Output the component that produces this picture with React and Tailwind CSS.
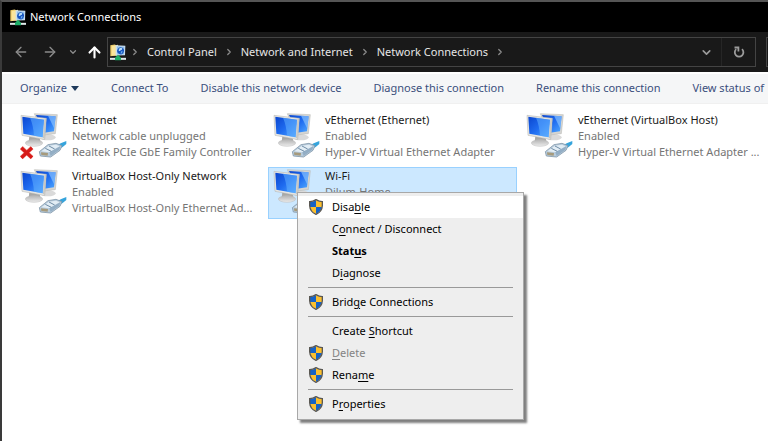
import { ArrowLeft, ArrowRight, ArrowUp, ChevronDown, ChevronRight } from "lucide-react";

// Network folder icon, used in the title bar and the address bar
function NetworkFolderIcon() {
  return (
    <svg viewBox="0 0 48 50" className="h-[17px] w-4 shrink-0" aria-hidden="true">
      <path d="M1 3 L14 1 L20 4 L20 34 L1 36 Z" fill="#f0cf6c" />
      <path d="M5 6 L24 2 L24 34 L5 34 Z" fill="#fae59c" />
      <path d="M17 3 L46 5 L45 33 L17 34 Z" fill="#c9def0" />
      <path d="M21 7 L43 8 L42 30 L21 31 Z" fill="#8fbce6" />
      <path d="M30 9 Q41 9 42 18 Q42 28 33 31 Q22 30 21 20 Q22 12 30 9 Z" fill="#1553c0" />
      <path d="M27 14 q6 -5 10 -2 q0 6 -5 6 q-3 4 -6 2 z" fill="#b5dcf8" />
      <path d="M33 22 l5 -2 l-2 7 l-4 2 z" fill="#6fb0ec" />
      <rect x="0" y="41" width="48" height="6" fill="#dfe9ea" />
      <path d="M24 32 L33 41 L33 48 L15 48 L15 41 Z" fill="#1fae68" />
    </svg>
  );
}

// Pair of monitors with an ethernet plug in front
function ConnectionIcon({ unplugged }) {
  return (
    <svg viewBox="0 0 144 144" className="h-12 w-12 shrink-0" aria-hidden="true">
      <defs>
        <linearGradient id="screen" x1="0" y1="0" x2="1" y2="1">
          <stop offset="0" stopColor="#0a45cf" />
          <stop offset="0.5" stopColor="#1f6cf0" />
          <stop offset="1" stopColor="#4fa8ff" />
        </linearGradient>
        <linearGradient id="stand" x1="0" y1="0" x2="0" y2="1">
          <stop offset="0" stopColor="#b4b4b4" />
          <stop offset="1" stopColor="#ececec" />
        </linearGradient>
      </defs>
      <ellipse cx="84" cy="76" rx="23" ry="9" fill="#dadada" />
      <path d="M43 5 L112 8 L106 65 L70 69 Z" fill="#d5d5d2" stroke="#b4b4b0" strokeWidth="1.5" />
      <path d="M48 9 L107 13 L102 58 L72 62 Z" fill="url(#screen)" />
      <path d="M84 11 L107 13 L103 50 Z" fill="#8fc8ff" opacity="0.65" />
      <path d="M28 72 L58 76 L62 91 L26 90 Z" fill="#a8a8a6" />
      <ellipse cx="42" cy="93" rx="26" ry="10" fill="url(#stand)" stroke="#bdbdbd" strokeWidth="1.5" />
      <path d="M3 10 L79 19 L74 83 L6 70 Z" fill="#e6e6e3" stroke="#b0b0ac" strokeWidth="1.5" />
      <path d="M7 14 L72 23 L68 76 L10 65 Z" fill="url(#screen)" />
      <path d="M30 17 L72 23 L68 76 L42 71 Q40 40 30 17 Z" fill="#62b0ff" opacity="0.55" />
      <path d="M73 22 L79 19 L74 83 L69 76 Z" fill="#c8c8c4" />
      {/* plug */}
      <path d="M104 104 L122 94 L139 87 L139 96 L128 105 L112 114 Z" fill="#35a4dc" />
      <path d="M58 119 L84 98 L108 94 L126 101 L120 115 L92 135 L61 132 Z" fill="#b7cbdc" stroke="#8399ab" strokeWidth="2.5" />
      <path d="M64 118 L87 101 L108 98 L119 103 L88 121 Z" fill="#e2edf5" />
      <path d="M88 121 L121 103 L118 113 L92 132 Z" fill="#93aec5" />
      <path d="M63 121 L84 123 L83 131 L64 129 Z" fill="#a69a7c" />
      <path d="M76 109 L94 118 M87 102 L104 111" stroke="#6f8ca5" strokeWidth="3" fill="none" />
      {unplugged && (
        <>
          <path d="M4 107 L36 137 M36 107 L4 137" stroke="#f4a9a2" strokeWidth="13" />
          <path d="M4 107 L36 137 M36 107 L4 137" stroke="#d61a18" strokeWidth="10" />
        </>
      )}
    </svg>
  );
}

function ShieldIcon() {
  return (
    <svg viewBox="0 0 42 48" className="h-4 w-3.5" aria-hidden="true">
      <path d="M21 3 Q12 9 3 9 L3 24 L21 24 Z" fill="#1763c6" />
      <path d="M21 3 Q30 9 39 9 L39 24 L21 24 Z" fill="#fcc02e" />
      <path d="M3 24 L21 24 L21 45 Q6 38 3 24 Z" fill="#fcc02e" />
      <path d="M39 24 L21 24 L21 45 Q36 38 39 24 Z" fill="#1763c6" />
      <path
        d="M21 2 Q30 8 40 8 L40 20 Q39 38 21 46 Q3 38 2 20 L2 8 Q12 8 21 2 Z"
        fill="none"
        stroke="#5a5853"
        strokeWidth="4"
      />
    </svg>
  );
}

function RefreshIcon() {
  return (
    <svg viewBox="0 0 12 12" className="size-3" fill="none" stroke="currentColor" strokeWidth="1.8" aria-hidden="true">
      <path d="M9 3.2 A4.3 4.3 0 1 1 3.2 3.2" />
      <path d="M1.5 1.5 H5.4 V5.4" />
    </svg>
  );
}

const crumbs = ["Control Panel", "Network and Internet", "Network Connections"];

const commands = [
  "Connect To",
  "Disable this network device",
  "Diagnose this connection",
  "Rename this connection",
  "View status of",
];

const connections = [
  { name: "Ethernet", status: "Network cable unplugged", device: "Realtek PCIe GbE Family Controller", unplugged: true },
  { name: "vEthernet (Ethernet)", status: "Enabled", device: "Hyper-V Virtual Ethernet Adapter" },
  { name: "vEthernet (VirtualBox Host)", status: "Enabled", device: "Hyper-V Virtual Ethernet Adapter ..." },
  { name: "VirtualBox Host-Only Network", status: "Enabled", device: "VirtualBox Host-Only Ethernet Ad..." },
  { name: "Wi-Fi", status: "Dilum-Home", selected: true },
];

// Each label is split around its underlined access key
const menuGroups = [
  [
    { label: ["Disa", "b", "le"], shield: true, active: true },
    { label: ["C", "o", "nnect / Disconnect"] },
    { label: ["Stat", "u", "s"], bold: true },
    { label: ["D", "i", "agnose"] },
  ],
  [{ label: ["Brid", "g", "e Connections"], shield: true }],
  [
    { label: ["Create ", "S", "hortcut"] },
    { label: ["", "D", "elete"], shield: true, disabled: true },
    { label: ["Rena", "m", "e"], shield: true },
  ],
  [{ label: ["P", "r", "operties"], shield: true }],
];

function TitleBar() {
  return (
    <header className="flex h-[30px] items-center gap-1 bg-black pl-2 text-white">
      <NetworkFolderIcon />
      <h1>Network Connections</h1>
    </header>
  );
}

function AddressBar() {
  return (
    <nav className="flex h-10 items-center bg-[#191919] text-[#e6e6e6]">
      <div className="flex w-[105px] shrink-0 items-center pl-[11px] text-[#8b8b8b]">
        <button aria-label="Back" className="mr-[13px]"><ArrowLeft size={16} /></button>
        <button aria-label="Forward" className="mr-2.5"><ArrowRight size={16} /></button>
        <button aria-label="Recent locations" className="mr-2"><ChevronDown size={10} strokeWidth={3} /></button>
        <button aria-label="Up" className="text-white"><ArrowUp size={17} strokeWidth={3} /></button>
      </div>
      <div className="flex h-[30px] flex-1 items-center border border-[#444] pl-0.5">
        <NetworkFolderIcon />
        <ChevronRight size={10} strokeWidth={3} className="ml-1 text-[#8b8b8b]" />
        {crumbs.map((c) => (
          <div key={c} className="flex items-center">
            <a href="#" className="ml-[7px] whitespace-nowrap">{c}</a>
            <ChevronRight size={10} strokeWidth={3} className="ml-[7px] text-[#8b8b8b]" />
          </div>
        ))}
        <button aria-label="Previous locations" className="ml-auto mr-2 text-[#9b9b9b]">
          <ChevronDown size={13} strokeWidth={3} />
        </button>
        <button aria-label="Refresh" className="flex h-full w-[34px] items-center justify-center border-l border-[#262626] text-[#9b9b9b]">
          <RefreshIcon />
        </button>
      </div>
      <div className="ml-2.5 h-[30px] w-0.5 border border-r-0 border-[#444]" />
    </nav>
  );
}

function CommandBar() {
  return (
    <div className="flex h-8 items-center gap-8 overflow-hidden border-b border-t-2 border-b-[#f0f0f0] border-t-white bg-[#f5f6f7] pl-[18px] whitespace-nowrap text-[#3b4f7d]">
      <button className="flex items-center gap-1">
        Organize
        <svg viewBox="0 0 8 5" className="h-[5px] w-2" aria-hidden="true">
          <path d="M0 0 H8 L4 5 Z" fill="#1e395b" />
        </svg>
      </button>
      {commands.map((c) => (
        <button key={c}>{c}</button>
      ))}
    </div>
  );
}

function ContextMenu() {
  return (
    <div
      role="menu"
      className="absolute left-[29px] top-[25px] z-10 w-[227px] border border-[#a8a8a8] bg-[#eeeeee] pb-1 pt-[3px] text-black shadow-[3px_3px_2px_rgba(0,0,0,0.5)]"
    >
      {menuGroups.map((group, i) => (
        <div key={i}>
          {i > 0 && <div role="separator" className="mx-2.5 my-[3px] h-px bg-[#999]" />}
          {group.map(({ label, shield, active, bold, disabled }) => (
            <button
              key={label.join("")}
              role="menuitem"
              disabled={disabled}
              className={`flex h-[22px] w-full items-center px-[11px] ${active ? "bg-white" : ""} ${bold ? "font-bold" : ""} ${disabled ? "text-[#838383]" : ""}`}
            >
              <span className="w-[23px] shrink-0">{shield && <ShieldIcon />}</span>
              <span>
                {label[0]}
                <u className="underline-offset-2">{label[1]}</u>
                {label[2]}
              </span>
            </button>
          ))}
        </div>
      ))}
    </div>
  );
}

function Connection({ name, status, device, unplugged, selected }) {
  return (
    <li className="relative">
      <button
        className={`flex h-[52px] w-full items-start gap-1 border pl-1 text-left ${selected ? "border-[#99d1ff] bg-[#cce8ff]" : "border-transparent"}`}
      >
        <ConnectionIcon unplugged={unplugged} />
        <span className="flex min-w-0 flex-col leading-4 whitespace-nowrap text-[#757575]">
          <span className="text-[#1a1a1a]">{name}</span>
          <span>{status}</span>
          <span>{device}</span>
        </span>
      </button>
      {selected && <ContextMenu />}
    </li>
  );
}

export default function App() {
  return (
    <div className="min-h-screen overflow-hidden border-l-2 border-t-2 border-l-[#3a3a3a] border-t-[#555] bg-white font-['Noto_Sans',sans-serif] text-[11px]">
      <TitleBar />
      <AddressBar />
      <CommandBar />
      <main>
        <ul className="-mr-0.5 grid grid-cols-3 gap-x-1 gap-y-1 pl-[13px] pt-[7px]">
          {connections.map((c) => (
            <Connection key={c.name} {...c} />
          ))}
        </ul>
      </main>
    </div>
  );
}
